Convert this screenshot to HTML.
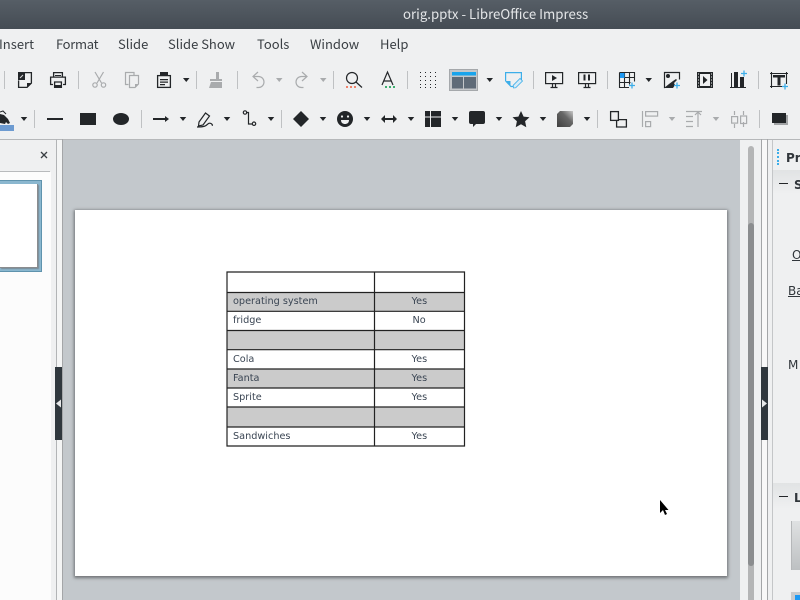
<!DOCTYPE html>
<html><head><meta charset="utf-8">
<style>
html,body{margin:0;padding:0}
body{width:800px;height:600px;overflow:hidden;position:relative;background:#eff0f1;font-family:"DejaVu Sans","Liberation Sans",sans-serif;color:#31363b}
.a{position:absolute}
.t{position:absolute;white-space:nowrap}
.menu{position:absolute;top:36px;font-size:13px;line-height:16px;font-family:"Noto Sans CJK JP","Liberation Sans",sans-serif;color:#3a3f44;white-space:nowrap}
.cell{position:absolute;font-size:9.7px;line-height:12px;color:#3a4553;white-space:nowrap}
.row{position:absolute;left:227px;width:238px}
</style></head><body>
<div class="a" style="left:0;top:0;width:800px;height:29px;background:linear-gradient(#565e66,#454c54)"></div>
<div class="t" style="left:403px;top:6px;font-size:13.25px;line-height:16px;color:#e4e6e8;font-family:'Noto Sans CJK JP','Liberation Sans',sans-serif">orig.pptx - LibreOffice Impress</div>

<div class="menu" style="left:-1px">Insert</div>
<div class="menu" style="left:56px;letter-spacing:-.3px">Format</div>
<div class="menu" style="left:118px">Slide</div>
<div class="menu" style="left:168px">Slide Show</div>
<div class="menu" style="left:257px">Tools</div>
<div class="menu" style="left:310px">Window</div>
<div class="menu" style="left:380px">Help</div>

<svg class="a" style="left:0;top:60px" width="800" height="80" viewBox="0 60 800 80">
<defs><linearGradient id="g1" x1="0" y1="1" x2="1" y2="0"><stop offset="0" stop-color="#3f3f3f"/><stop offset=".6" stop-color="#666"/><stop offset="1" stop-color="#c8c8c8"/></linearGradient></defs>
<g fill="#bfc1c3">
<rect x="4" y="71" width="1" height="18"/><rect x="78" y="71" width="1" height="18"/><rect x="196" y="71" width="1" height="18"/><rect x="237" y="71" width="1" height="18"/><rect x="333" y="71" width="1" height="18"/><rect x="407" y="71" width="1" height="18"/><rect x="533" y="71" width="1" height="18"/><rect x="607" y="71" width="1" height="18"/><rect x="758" y="71" width="1" height="18"/>
<rect x="34" y="110" width="1" height="18"/><rect x="141" y="110" width="1" height="18"/><rect x="281" y="110" width="1" height="18"/><rect x="597" y="110" width="1" height="18"/><rect x="759" y="110" width="1" height="18"/>
</g>
<!-- dark row1 -->
<path d="M18 72h7v8l-3 0-4 0z" fill="#232629"/><path d="M20 78l3-3" stroke="#d8d9da" stroke-width="1"/>
<path d="M25 72.600h6.400v10.500l-4.400 4.300h-8.400v-7" fill="none" stroke="#232629" stroke-width="1.300"/>
<path d="M27 88v-5h5z" fill="#232629"/>
<g fill="none" stroke="#232629" stroke-width="1.300">
<path d="M53.600 77v-4.400h8.800v4.400"/>
<path d="M53 84.500h-2.400v-7.400h14.800v7.400h-2.400"/>
<path d="M54.600 82h6.800v5.400h-6.800z"/>
<rect x="157.600" y="75.600" width="12.800" height="11.800"/>
</g>
<path d="M55 75h6v1h-6zM54 85h8v3h-8z" fill="#232629"/>
<path d="M160 72h8v4h-8zM160 79h8v1.200h-8zM160 81.500h8v1.200h-8zM160 84h5v1.200h-5z" fill="#232629"/>
<path d="M183 78h6.500l-3.250 4z" fill="#232629"/>
<!-- disabled row1 -->
<g fill="none" stroke="#a9abad" stroke-width="1.200">
<path d="M95 72l6.500 11M103.500 72l-6.500 11"/><circle cx="95" cy="85" r="2.200"/><circle cx="103.500" cy="85" r="2.200"/>
<path d="M128.500 84.500h-3v-12h8.500v3"/><path d="M129.500 75.500h9.000v8.500l-3.500 3.500h-5.500z"/>
<path d="M258 72l-5 4.500 5 4.500M253.500 76.500h5a5.500 5.500 0 0 1 0 11h-2"/>
<path d="M302 72l5 4.500-5 4.500M306.500 76.500h-5a5.500 5.500 0 0 0 0 11h2"/>
</g>
<path d="M135 88v-4h4z" fill="#a9abad"/>
<path d="M216 72h3v7h3v2h-12v-2h6zM211 82h11v6h-13z" fill="#a9abad"/>
<path d="M276 78h6.500l-3.250 4zM320 78h6.500l-3.250 4z" fill="#a9abad"/>
<!-- find, A -->
<g fill="none" stroke="#232629" stroke-width="1.200">
<circle cx="352" cy="78" r="5.500"/><path d="M356 82l6 5.500"/>
<path d="M382 85l5.500-13 5.500 13M383.500 81h8"/>
</g>
<path d="M346 86h2v2h-2zM350 86h2v2h-2zM354 86h2v2h-2z" fill="#f0836c"/>
<path d="M385 86h2v2h-2zM389 86h2v2h-2zM393 86h2v2h-2z" fill="#3dae6f"/>
<path d="M486.500 78h6.500l-3.250 4zM645.500 78h6.500l-3.250 4z" fill="#232629"/>
<!-- grid -->
<g fill="#232629"><path d="M420 72h1v1h-1zM425 72h1v1h-1zM430 72h1v1h-1zM435 72h1v1h-1zM420 76h1v1h-1zM425 76h1v1h-1zM430 76h1v1h-1zM435 76h1v1h-1zM420 80h1v1h-1zM425 80h1v1h-1zM430 80h1v1h-1zM435 80h1v1h-1zM420 84h1v1h-1zM425 84h1v1h-1zM430 84h1v1h-1zM435 84h1v1h-1zM420 87h1v1h-1zM425 87h1v1h-1zM430 87h1v1h-1zM435 87h1v1h-1z"/></g>
<rect x="449.500" y="69.500" width="28" height="21" fill="#c4c7ca" stroke="#a5a8ab"/>
<rect x="452" y="72" width="24" height="3.500" fill="#19a4ec"/>
<rect x="452" y="77" width="11" height="11.500" fill="#5f6b78"/><rect x="464" y="77" width="12" height="11.500" fill="#5f6b78"/>
<!-- note -->
<path d="M505.600 81v-8.400h15.800v7.400M505.600 81l5.400 5.500h2.500" fill="none" stroke="#3daee9" stroke-width="1.200"/>
<path d="M506 81h4.500v4.500z" fill="#3daee9"/>
<path d="M513.500 88l-.3-2.700 6.800-6.800 2.500 2.500-6.800 6.800z" fill="#d6ebf8" stroke="#3daee9" stroke-width=".8"/>
<!-- monitors -->
<g fill="none" stroke="#232629" stroke-width="1.200">
<rect x="545.600" y="72.600" width="17" height="11"/><path d="M552.500 84v3M555.500 84v3M550.500 87.500h7"/>
<rect x="578.600" y="72.600" width="17" height="11"/><path d="M585.500 84v3M588.500 84v3M583.500 87.500h7"/>
</g>
<path d="M552 75l5 3-5 3zM583.500 74.500h2v6h-2zM588 74.500h2v6h-2z" fill="#232629"/>
<!-- table icon -->
<g fill="none" stroke="#232629" stroke-width="1.100">
<path d="M619.500 72.500h15v9M619.500 72.500v15h9.500M619.500 77.500h15M619.500 82.500h11M624.500 72.500v15M629.500 72.500v12"/>
</g>
<rect x="620" y="73" width="4.500" height="5" fill="#1d99f3"/>
<!-- image -->
<path d="M665 87.500h-.5v-15h15v7" fill="none" stroke="#232629" stroke-width="1.200"/>
<circle cx="668" cy="76" r="2" fill="#232629"/>
<path d="M664 88l5-4 4-3 3-2 1 1-3 3 1 2-2 3z" fill="#232629"/>
<!-- film -->
<rect x="697" y="72" width="16" height="16" fill="#232629"/>
<rect x="700" y="74" width="10" height="12" fill="#eff0f1"/>
<path d="M698 73.500h1v1h-1zM698 76.500h1v1h-1zM698 79.500h1v1h-1zM698 82.500h1v1h-1zM698 85.500h1v1h-1zM711 73.500h1v1h-1zM711 76.500h1v1h-1zM711 79.500h1v1h-1zM711 82.500h1v1h-1zM711 85.500h1v1h-1z" fill="#eff0f1"/>
<path d="M703 76l4.500 4-4.500 4z" fill="#232629"/>
<!-- chart -->
<path d="M734 72h4v15h-4zM740 77h4v10h-4zM731 73h1v15h-1zM730 87h16v1h-16z" fill="#232629"/>
<!-- text box -->
<path d="M771.500 72v16M786.500 72v12M770 73.500h18M770 86.500h12" fill="none" stroke="#232629" stroke-width="1.100"/>
<path d="M773 75h12v2.500h-4.500v8h-3v-8h-4.500z" fill="#232629"/>
<!-- blue plus -->
<g stroke="#3daee9" stroke-width="1.300" fill="none">
<path d="M629 85.500h6M632 82.500v6M674 85.500h6M677 82.500v6M741 73.500h6M744 70.500v6M782 86.500h6M785 83.500v6"/>
</g>

<!-- row2 -->
<rect x="0" y="125" width="14" height="6" fill="#6d9bd1"/>
<path d="M0 114l4 1 4 4 2 4-2 1-2-2-1 2-5-1z" fill="#232629"/><path d="M0 112l3-1 3 3" stroke="#232629" fill="none"/>
<path d="M20.750 117h6.500l-3.250 4zM179.750 117h6.500l-3.250 4zM223.750 117h6.500l-3.250 4zM267.750 117h6.500l-3.250 4zM319.750 117h6.500l-3.250 4zM363.750 117h6.500l-3.250 4zM407.750 117h6.500l-3.250 4zM451.750 117h6.500l-3.250 4zM495.750 117h6.500l-3.250 4zM539.750 117h6.500l-3.250 4zM583.750 117h6.500l-3.250 4z" fill="#232629"/>
<path d="M668.750 117h6.500l-3.250 4zM712.750 117h6.500l-3.250 4z" fill="#a9abad"/>
<rect x="47" y="118" width="16" height="2" fill="#232629"/>
<rect x="80" y="113" width="16" height="12" fill="#232629"/>
<ellipse cx="121" cy="119" rx="8" ry="6" fill="#232629"/>
<rect x="153" y="118" width="13" height="2" fill="#232629"/><path d="M165 116l4 3-4 3z" fill="#232629"/>
<g fill="none" stroke="#232629" stroke-width="1.200">
<path d="M199 122l6.500-9 4 3-6.500 9-4.500 1z"/><path d="M197 127c4 0 7 0 9-1.500s3-3 5-2 1 3 1.500 1"/>
<path d="M246 112.500h2.500v11.500h4"/><circle cx="245" cy="112.500" r="1.700"/><circle cx="254" cy="123.700" r="1.700"/>
</g>
<path d="M301 111l8 8-8 8-8-8z" fill="#232629"/>
<circle cx="345" cy="119" r="8" fill="#232629"/><circle cx="342" cy="116.500" r="1.100" fill="#eff0f1"/><circle cx="348" cy="116.500" r="1.100" fill="#eff0f1"/><path d="M341 120h8c0 3-2 4-4 4s-4-1-4-4z" fill="#eff0f1"/>
<path d="M381 119l4-4v3h8v-3l4 4-4 4v-3h-8v3z" fill="#232629"/>
<path d="M425 111h5v5.500h-5zM431 111h10v5.500h-10zM425 117.500h5v9.500h-5zM431 117.500h10v9.500h-10z" fill="#232629"/>
<path d="M471 111h12a2 2 0 0 1 2 2v9a2 2 0 0 1-2 2h-7l-3 3v-3h-2a2 2 0 0 1-2-2v-9a2 2 0 0 1 2-2z" fill="#232629"/>
<path d="M521 111l2.600 5.600 5.900.7-4.400 4 1.200 6-5.300-3-5.300 3 1.200-6-4.400-4 5.900-.7z" fill="#232629"/>
<path d="M557 114l3-3h13v13l-3 3h-13z" fill="url(#g1)"/>
<g fill="none" stroke="#232629" stroke-width="1.300">
<rect x="610.600" y="111.600" width="7.800" height="8.800"/><path d="M618.500 119.600h7.900v7.400h-9.800v-6"/>
</g>
<g fill="none" stroke="#a9abad" stroke-width="1.200">
<path d="M642.500 111v16"/><rect x="645.600" y="111.600" width="12" height="4.500"/><rect x="645.600" y="121.600" width="5" height="5"/>
<path d="M686 111.500h16M686 116.500h7M686 121.500h7M686 126.500h7M698 127v-15M695 115l3-3 3 3"/>
<path d="M734.500 111v4M734.500 124v4M743.500 111v4M743.500 122v5"/><rect x="731.600" y="116.600" width="6" height="6.500"/><rect x="740.600" y="116" width="6" height="7.500"/>
</g>
<rect x="774" y="115" width="14" height="10" fill="#a2a4a6"/><rect x="772" y="113" width="14" height="10" fill="#232629"/>
</svg>

<!-- divider under toolbars -->
<div class="a" style="left:0;top:139px;width:800px;height:1px;background:#b6b8ba"></div>

<!-- left panel -->
<div class="a" style="left:0;top:140px;width:56px;height:460px;background:#eff0f1"></div>
<div class="a" style="left:0;top:171px;width:50px;height:1px;background:#b8babc"></div>
<div class="a" style="left:0;top:172px;width:51px;height:428px;background:#fcfcfc"></div>
<svg class="a" style="left:40px;top:151px" width="9" height="9"><path d="M1 1l6 6M7 1l-6 6" stroke="#3a3f44" stroke-width="1.300"/></svg>
<div class="a" style="left:0;top:180px;width:42px;height:92px;background:#8bb7cf;border:1px solid #5f93ad;border-left:0;box-sizing:border-box"></div>
<div class="a" style="left:0;top:184px;width:38px;height:84px;background:#fff;border-right:1px solid #8a8c8e;border-bottom:1px solid #8a8c8e;box-shadow:1px 1px 1px #7a8a94;box-sizing:border-box"></div>

<div class="a" style="left:56px;top:139px;width:1px;height:461px;background:#b2b4b6"></div>
<div class="a" style="left:57px;top:140px;width:5px;height:460px;background:#f4f5f5"></div>
<div class="a" style="left:62px;top:139px;width:1px;height:461px;background:#a4a6a8"></div>
<div class="a" style="left:55px;top:367px;width:7px;height:73px;background:#2f373d"></div>
<svg class="a" style="left:55px;top:399px" width="7" height="9"><path d="M1 4.500L6 0.500v8z" fill="#e8e9ea"/></svg>

<!-- canvas -->
<div class="a" style="left:63px;top:140px;width:677px;height:460px;background:#c3c8cc"></div>
<div class="a" style="left:75px;top:210px;width:652px;height:366px;background:#fff;box-sizing:border-box;box-shadow:0 1px 3px 1px #6f7275"></div>

<!-- table -->
<div class="a" style="left:227px;top:272px;width:238px;height:174px;background:#fff"></div>
<div class="row" style="top:292px;height:19px;background:#cbcbcb"></div>
<div class="row" style="top:330px;height:20px;background:#cbcbcb"></div>
<div class="row" style="top:369px;height:19px;background:#cbcbcb"></div>
<div class="row" style="top:407px;height:20px;background:#cbcbcb"></div>
<svg class="a" style="left:226px;top:271px" width="241" height="177">
<path d="M1 1h237.500v174h-237.500zM148.500 1v174M1 21.500h237.500M1 40.300h237.500M1 59.500h237.500M1 78.700h237.500M1 98h237.500M1 117h237.500M1 136h237.500M1 156h237.500" fill="none" stroke="#222" stroke-width="1.200"/>
</svg>
<div class="cell" style="left:233px;top:296px">operating system</div>
<div class="cell" style="left:233px;top:315px">fridge</div>
<div class="cell" style="left:233px;top:354px">Cola</div>
<div class="cell" style="left:233px;top:373px">Fanta</div>
<div class="cell" style="left:233px;top:392px">Sprite</div>
<div class="cell" style="left:233px;top:431px">Sandwiches</div>
<div class="cell" style="left:411.500px;top:296px">Yes</div>
<div class="cell" style="left:412.500px;top:315px">No</div>
<div class="cell" style="left:411.500px;top:354px">Yes</div>
<div class="cell" style="left:411.500px;top:373px">Yes</div>
<div class="cell" style="left:411.500px;top:392px">Yes</div>
<div class="cell" style="left:411.500px;top:431px">Yes</div>

<!-- cursor -->
<svg class="a" style="left:659px;top:499px" width="12" height="18"><path d="M1 1v13l3-3 2 5 2-1-2-4h3.500z" fill="#000"/></svg>

<!-- scrollbar -->
<div class="a" style="left:740px;top:140px;width:21px;height:460px;background:#eff0f1"></div>
<div class="a" style="left:748px;top:146px;width:6px;height:454px;background:#b4b5b6;border-radius:3px 3px 0 0"></div>
<div class="a" style="left:748px;top:223px;width:6px;height:343px;background:#8b8d8f;border-radius:3px"></div>

<!-- right side -->
<div class="a" style="left:761px;top:139px;width:1px;height:461px;background:#a4a6a8"></div>
<div class="a" style="left:762px;top:140px;width:5px;height:460px;background:#f8f8f8"></div>
<div class="a" style="left:767px;top:139px;width:1px;height:461px;background:#a4a6a8"></div>
<div class="a" style="left:772px;top:140px;width:1px;height:460px;background:#c4c6c8"></div>
<div class="a" style="left:761px;top:367px;width:7px;height:73px;background:#2f373d"></div>
<svg class="a" style="left:761px;top:399px" width="7" height="9"><path d="M1 0.500L6 4.500 1 8.500z" fill="#e8e9ea"/></svg>
<div class="a" style="left:773px;top:140px;width:27px;height:460px;background:#eff0f1"></div>
<div class="a" style="left:777px;top:149px;width:1px;height:16px;border-left:2px dotted #3daee9"></div>
<div class="t" style="left:786px;top:151px;font-size:12px;line-height:15px;font-weight:bold;color:#31363b">Pr</div>
<div class="a" style="left:773px;top:170px;width:27px;height:24px;background:linear-gradient(#e1e3e4,#eff0f1)"></div>
<div class="a" style="left:779px;top:183px;width:9px;height:1px;background:#232629"></div>
<div class="t" style="left:794px;top:178px;font-size:12px;line-height:15px;font-weight:bold">S</div>
<div class="t" style="left:792px;top:248px;font-size:12px;line-height:15px;text-decoration:underline">O</div>
<div class="t" style="left:788px;top:284px;font-size:12px;line-height:15px;text-decoration:underline">Ba</div>
<div class="t" style="left:788px;top:358px;font-size:12px;line-height:15px">M</div>
<div class="a" style="left:773px;top:483px;width:27px;height:26px;background:linear-gradient(#e1e3e4,#eff0f1)"></div>
<div class="a" style="left:779px;top:496px;width:9px;height:1px;background:#232629"></div>
<div class="t" style="left:794px;top:491px;font-size:12px;line-height:15px;font-weight:bold">L</div>
<div class="a" style="left:791px;top:521px;width:9px;height:49px;background:linear-gradient(#dfe1e2,#bdc0c2);border-left:1px solid #b5b7b9;box-sizing:border-box"></div>
<div class="a" style="left:791px;top:592px;width:9px;height:8px;background:#c9cbcd"></div>
<div class="a" style="left:795px;top:595px;width:5px;height:5px;background:#1d99f3"></div>
</body></html>
